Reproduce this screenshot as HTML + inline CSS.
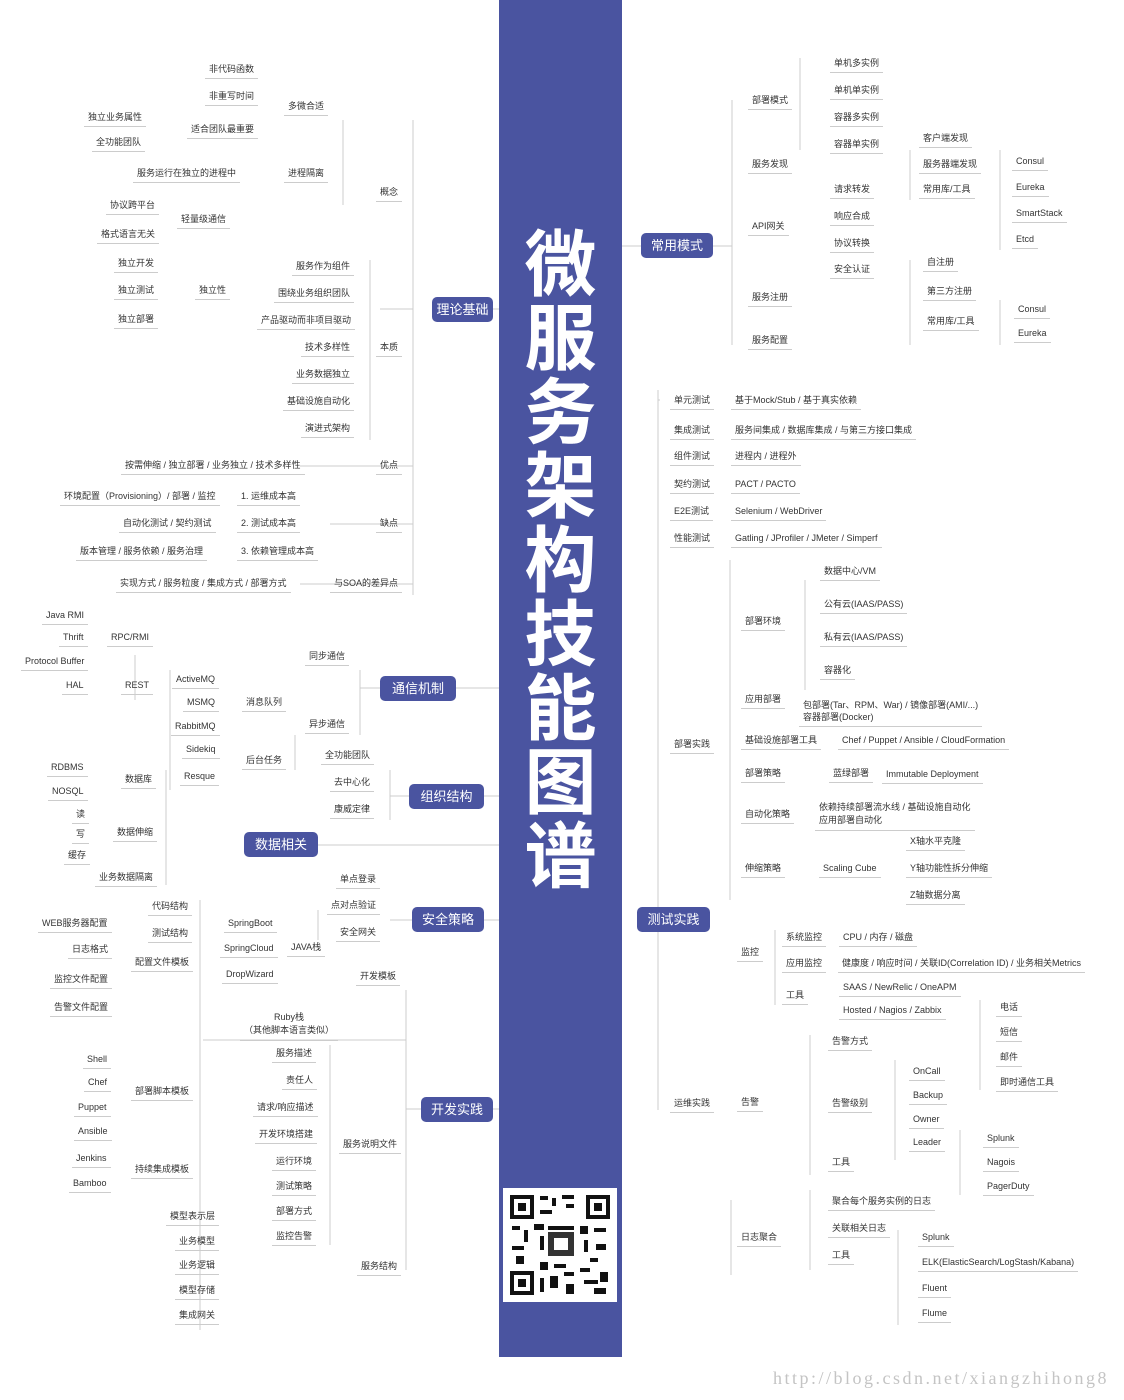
<!DOCTYPE html>
<html><head><meta charset="utf-8"><style>
body{margin:0;width:1124px;height:1400px;background:#fff;position:relative;overflow:hidden;font-family:"Liberation Sans","Noto Sans CJK SC",sans-serif}
i{font-style:normal;position:absolute;font-size:9px;color:#333;white-space:nowrap;line-height:12px;padding:0 4px 3px 4px;margin-left:-4px;margin-top:-7px;border-bottom:1px solid #ccc}
b{position:absolute;background:#4a54a0;color:#fff;font-size:13px;font-weight:normal;border-radius:5px;text-align:center;line-height:25px;height:25px}
#col{position:absolute;left:499px;top:0;width:123px;height:1357px;background:#4a54a0}
#title{position:absolute;left:499px;top:222px;width:123px;text-align:center;color:#fff;font-size:72px;font-weight:bold;line-height:74px;font-family:"Noto Sans CJK SC",sans-serif}
svg{position:absolute;left:0;top:0}
#wm{position:absolute;left:773px;top:1368px;font-family:"Liberation Serif",serif;font-size:18px;letter-spacing:2.5px;color:#c4c4c4}
</style></head><body>
<svg width="1124" height="1400" stroke="#ccc" stroke-width="1" fill="none">
<path d="M413 120V595M343 120V205M370 260V440M413 466H300M413 524H330M413 584H300M380 309H413M493 309H499M622 246H641M713 246H732M732 100V345M800 58V150M910 150V200M1000 150V250M910 260V345M1000 300V345M658 390V1110M638 920H658M658 400H660M730 560V900M805 580V690M775 930V1005M810 1035V1175M895 1060V1160M980 1000V1090M960 1130V1195M810 1190V1270M898 1230V1325M731 1200V1275M360 670V735M380 688H360M456 688H499M295 735V770M390 770V820M409 796H390M484 796H499M166 770V885M318 845H244M318 845H499M200 900V1330M406 990V1270M318 910V940M412 920H390M484 920H499M203 1040H406M330 1045V1245M421 1109H406M493 1109H499M170 670V790M135 655V700"/>
</svg>
<div id="col"></div>
<div id="title">微<br>服<br>务<br>架<br>构<br>技<br>能<br>图<br>谱</div>
<svg width="1124" height="1400" style="left:0;top:0">
<rect x="503" y="1188" width="114" height="114" fill="#fff"/>
<g fill="#111">
<rect x="510" y="1195" width="24" height="24"/><rect x="514" y="1199" width="16" height="16" fill="#fff"/><rect x="518" y="1203" width="8" height="8"/>
<rect x="586" y="1195" width="24" height="24"/><rect x="590" y="1199" width="16" height="16" fill="#fff"/><rect x="594" y="1203" width="8" height="8"/>
<rect x="510" y="1271" width="24" height="24"/><rect x="514" y="1275" width="16" height="16" fill="#fff"/><rect x="518" y="1279" width="8" height="8"/>
<rect x="540" y="1196" width="8" height="4"/><rect x="552" y="1198" width="4" height="8"/><rect x="562" y="1195" width="12" height="4"/><rect x="566" y="1204" width="8" height="4"/><rect x="540" y="1210" width="12" height="4"/>
<rect x="512" y="1226" width="8" height="4"/><rect x="524" y="1230" width="4" height="12"/><rect x="512" y="1246" width="12" height="4"/><rect x="516" y="1256" width="8" height="8"/><rect x="534" y="1224" width="10" height="6"/>
<rect x="540" y="1236" width="4" height="14"/><rect x="548" y="1226" width="26" height="4"/><rect x="548" y="1232" width="26" height="24" fill="#333"/><rect x="554" y="1238" width="14" height="12" fill="#fff"/>
<rect x="580" y="1226" width="8" height="8"/><rect x="594" y="1228" width="12" height="4"/><rect x="584" y="1240" width="4" height="12"/><rect x="596" y="1244" width="10" height="6"/><rect x="590" y="1258" width="8" height="4"/>
<rect x="540" y="1262" width="8" height="8"/><rect x="554" y="1264" width="12" height="4"/><rect x="540" y="1278" width="4" height="14"/><rect x="550" y="1276" width="8" height="12"/><rect x="564" y="1272" width="10" height="4"/>
<rect x="566" y="1284" width="8" height="10"/><rect x="580" y="1268" width="10" height="4"/><rect x="584" y="1280" width="14" height="4"/><rect x="600" y="1272" width="8" height="10"/><rect x="594" y="1288" width="12" height="6"/>
</g></svg>

<b style="left:432px;top:297px;width:61px">理论基础</b>
<b style="left:641px;top:233px;width:72px">常用模式</b>
<b style="left:380px;top:676px;width:76px">通信机制</b>
<b style="left:409px;top:784px;width:75px">组织结构</b>
<b style="left:244px;top:832px;width:74px">数据相关</b>
<b style="left:412px;top:907px;width:72px">安全策略</b>
<b style="left:637px;top:907px;width:73px">测试实践</b>
<b style="left:421px;top:1097px;width:72px">开发实践</b>

<i style="left:209px;top:70px">非代码函数</i>
<i style="left:209px;top:97px">非重写时间</i>
<i style="left:288px;top:107px">多微合适</i>
<i style="left:88px;top:118px">独立业务属性</i>
<i style="left:191px;top:130px">适合团队最重要</i>
<i style="left:96px;top:143px">全功能团队</i>
<i style="left:137px;top:174px">服务运行在独立的进程中</i>
<i style="left:288px;top:174px">进程隔离</i>
<i style="left:380px;top:193px">概念</i>
<i style="left:110px;top:206px">协议跨平台</i>
<i style="left:181px;top:220px">轻量级通信</i>
<i style="left:101px;top:235px">格式语言无关</i>
<i style="left:118px;top:264px">独立开发</i>
<i style="left:296px;top:267px">服务作为组件</i>
<i style="left:278px;top:294px">围绕业务组织团队</i>
<i style="left:118px;top:291px">独立测试</i>
<i style="left:199px;top:291px">独立性</i>
<i style="left:118px;top:320px">独立部署</i>
<i style="left:261px;top:321px">产品驱动而非项目驱动</i>
<i style="left:305px;top:348px">技术多样性</i>
<i style="left:380px;top:348px">本质</i>
<i style="left:296px;top:375px">业务数据独立</i>
<i style="left:287px;top:402px">基础设施自动化</i>
<i style="left:305px;top:429px">演进式架构</i>
<i style="left:125px;top:466px">按需伸缩 / 独立部署 / 业务独立 / 技术多样性</i>
<i style="left:380px;top:466px">优点</i>
<i style="left:64px;top:497px">环境配置（Provisioning）/ 部署 / 监控</i>
<i style="left:241px;top:497px">1. 运维成本高</i>
<i style="left:123px;top:524px">自动化测试 / 契约测试</i>
<i style="left:241px;top:524px">2. 测试成本高</i>
<i style="left:380px;top:524px">缺点</i>
<i style="left:80px;top:552px">版本管理 / 服务依赖 / 服务治理</i>
<i style="left:241px;top:552px">3. 依赖管理成本高</i>
<i style="left:120px;top:584px">实现方式 / 服务粒度 / 集成方式 / 部署方式</i>
<i style="left:334px;top:584px">与SOA的差异点</i>
<i style="left:46px;top:616px">Java RMI</i>
<i style="left:63px;top:638px">Thrift</i>
<i style="left:111px;top:638px">RPC/RMI</i>
<i style="left:25px;top:662px">Protocol Buffer</i>
<i style="left:309px;top:657px">同步通信</i>
<i style="left:66px;top:686px">HAL</i>
<i style="left:125px;top:686px">REST</i>
<i style="left:176px;top:680px">ActiveMQ</i>
<i style="left:187px;top:703px">MSMQ</i>
<i style="left:246px;top:703px">消息队列</i>
<i style="left:175px;top:727px">RabbitMQ</i>
<i style="left:309px;top:725px">异步通信</i>
<i style="left:186px;top:750px">Sidekiq</i>
<i style="left:325px;top:756px">全功能团队</i>
<i style="left:246px;top:761px">后台任务</i>
<i style="left:51px;top:768px">RDBMS</i>
<i style="left:125px;top:780px">数据库</i>
<i style="left:184px;top:777px">Resque</i>
<i style="left:334px;top:783px">去中心化</i>
<i style="left:52px;top:792px">NOSQL</i>
<i style="left:334px;top:810px">康威定律</i>
<i style="left:76px;top:815px">读</i>
<i style="left:76px;top:835px">写</i>
<i style="left:117px;top:833px">数据伸缩</i>
<i style="left:68px;top:856px">缓存</i>
<i style="left:99px;top:878px">业务数据隔离</i>
<i style="left:340px;top:880px">单点登录</i>
<i style="left:152px;top:907px">代码结构</i>
<i style="left:331px;top:906px">点对点验证</i>
<i style="left:42px;top:924px">WEB服务器配置</i>
<i style="left:228px;top:924px">SpringBoot</i>
<i style="left:152px;top:934px">测试结构</i>
<i style="left:340px;top:933px">安全网关</i>
<i style="left:72px;top:950px">日志格式</i>
<i style="left:224px;top:949px">SpringCloud</i>
<i style="left:291px;top:948px">JAVA栈</i>
<i style="left:135px;top:963px">配置文件模板</i>
<i style="left:226px;top:975px">DropWizard</i>
<i style="left:54px;top:980px">监控文件配置</i>
<i style="left:360px;top:977px">开发模板</i>
<i style="left:54px;top:1008px">告警文件配置</i>
<i style="left:244px;top:1018px;text-align:center;line-height:13px">Ruby栈<br>（其他脚本语言类似）</i>
<i style="left:276px;top:1054px">服务描述</i>
<i style="left:87px;top:1060px">Shell</i>
<i style="left:88px;top:1083px">Chef</i>
<i style="left:286px;top:1081px">责任人</i>
<i style="left:135px;top:1092px">部署脚本模板</i>
<i style="left:78px;top:1108px">Puppet</i>
<i style="left:257px;top:1108px">请求/响应描述</i>
<i style="left:78px;top:1132px">Ansible</i>
<i style="left:259px;top:1135px">开发环境搭建</i>
<i style="left:343px;top:1145px">服务说明文件</i>
<i style="left:76px;top:1159px">Jenkins</i>
<i style="left:276px;top:1162px">运行环境</i>
<i style="left:135px;top:1170px">持续集成模板</i>
<i style="left:73px;top:1184px">Bamboo</i>
<i style="left:276px;top:1187px">测试策略</i>
<i style="left:170px;top:1217px">模型表示层</i>
<i style="left:276px;top:1212px">部署方式</i>
<i style="left:179px;top:1242px">业务模型</i>
<i style="left:276px;top:1237px">监控告警</i>
<i style="left:179px;top:1266px">业务逻辑</i>
<i style="left:361px;top:1267px">服务结构</i>
<i style="left:179px;top:1291px">模型存储</i>
<i style="left:179px;top:1316px">集成网关</i>

<i style="left:834px;top:64px">单机多实例</i>
<i style="left:752px;top:101px">部署模式</i>
<i style="left:834px;top:91px">单机单实例</i>
<i style="left:834px;top:118px">容器多实例</i>
<i style="left:923px;top:139px">客户端发现</i>
<i style="left:834px;top:145px">容器单实例</i>
<i style="left:752px;top:165px">服务发现</i>
<i style="left:923px;top:165px">服务器端发现</i>
<i style="left:1016px;top:162px">Consul</i>
<i style="left:923px;top:190px">常用库/工具</i>
<i style="left:1016px;top:188px">Eureka</i>
<i style="left:834px;top:190px">请求转发</i>
<i style="left:1016px;top:214px">SmartStack</i>
<i style="left:834px;top:217px">响应合成</i>
<i style="left:752px;top:227px">API网关</i>
<i style="left:1016px;top:240px">Etcd</i>
<i style="left:834px;top:244px">协议转换</i>
<i style="left:927px;top:263px">自注册</i>
<i style="left:834px;top:270px">安全认证</i>
<i style="left:927px;top:292px">第三方注册</i>
<i style="left:752px;top:298px">服务注册</i>
<i style="left:1018px;top:310px">Consul</i>
<i style="left:927px;top:322px">常用库/工具</i>
<i style="left:1018px;top:334px">Eureka</i>
<i style="left:752px;top:341px">服务配置</i>
<i style="left:674px;top:401px">单元测试</i><i style="left:735px;top:401px">基于Mock/Stub / 基于真实依赖</i>
<i style="left:674px;top:431px">集成测试</i><i style="left:735px;top:431px">服务间集成 / 数据库集成 / 与第三方接口集成</i>
<i style="left:674px;top:457px">组件测试</i><i style="left:735px;top:457px">进程内 / 进程外</i>
<i style="left:674px;top:485px">契约测试</i><i style="left:735px;top:485px">PACT / PACTO</i>
<i style="left:674px;top:512px">E2E测试</i><i style="left:735px;top:512px">Selenium / WebDriver</i>
<i style="left:674px;top:539px">性能测试</i><i style="left:735px;top:539px">Gatling / JProfiler / JMeter / Simperf</i>
<i style="left:824px;top:572px">数据中心/VM</i>
<i style="left:824px;top:605px">公有云(IAAS/PASS)</i>
<i style="left:745px;top:622px">部署环境</i>
<i style="left:824px;top:638px">私有云(IAAS/PASS)</i>
<i style="left:824px;top:671px">容器化</i>
<i style="left:745px;top:700px">应用部署</i>
<i style="left:803px;top:706px;line-height:12px">包部署(Tar、RPM、War) / 镜像部署(AMI/...)<br>容器部署(Docker)</i>
<i style="left:674px;top:745px">部署实践</i>
<i style="left:745px;top:741px">基础设施部署工具</i><i style="left:842px;top:741px">Chef / Puppet / Ansible / CloudFormation</i>
<i style="left:745px;top:774px">部署策略</i><i style="left:833px;top:774px">蓝绿部署</i><i style="left:886px;top:775px">Immutable Deployment</i>
<i style="left:819px;top:808px;line-height:13px">依赖持续部署流水线 / 基础设施自动化<br>应用部署自动化</i>
<i style="left:745px;top:815px">自动化策略</i>
<i style="left:910px;top:842px">X轴水平克隆</i>
<i style="left:745px;top:869px">伸缩策略</i><i style="left:823px;top:869px">Scaling Cube</i><i style="left:910px;top:869px">Y轴功能性拆分伸缩</i>
<i style="left:910px;top:896px">Z轴数据分离</i>
<i style="left:741px;top:953px">监控</i>
<i style="left:786px;top:938px">系统监控</i><i style="left:843px;top:938px">CPU / 内存 / 磁盘</i>
<i style="left:786px;top:964px">应用监控</i><i style="left:842px;top:964px">健康度 / 响应时间 / 关联ID(Correlation ID) / 业务相关Metrics</i>
<i style="left:786px;top:996px">工具</i><i style="left:843px;top:988px">SAAS / NewRelic / OneAPM</i><i style="left:843px;top:1011px">Hosted / Nagios / Zabbix</i>
<i style="left:1000px;top:1008px">电话</i>
<i style="left:1000px;top:1033px">短信</i>
<i style="left:832px;top:1042px">告警方式</i>
<i style="left:1000px;top:1058px">邮件</i>
<i style="left:913px;top:1072px">OnCall</i>
<i style="left:1000px;top:1083px">即时通信工具</i>
<i style="left:913px;top:1096px">Backup</i>
<i style="left:674px;top:1104px">运维实践</i>
<i style="left:741px;top:1103px">告警</i>
<i style="left:832px;top:1104px">告警级别</i>
<i style="left:913px;top:1120px">Owner</i>
<i style="left:987px;top:1139px">Splunk</i>
<i style="left:913px;top:1143px">Leader</i>
<i style="left:832px;top:1163px">工具</i><i style="left:987px;top:1163px">Nagois</i>
<i style="left:987px;top:1187px">PagerDuty</i>
<i style="left:832px;top:1202px">聚合每个服务实例的日志</i>
<i style="left:832px;top:1229px">关联相关日志</i>
<i style="left:922px;top:1238px">Splunk</i>
<i style="left:741px;top:1238px">日志聚合</i>
<i style="left:832px;top:1256px">工具</i>
<i style="left:922px;top:1263px">ELK(ElasticSearch/LogStash/Kabana)</i>
<i style="left:922px;top:1289px">Fluent</i>
<i style="left:922px;top:1314px">Flume</i>
<div id="wm">http://blog.csdn.net/xiangzhihong8</div>
</body></html>
